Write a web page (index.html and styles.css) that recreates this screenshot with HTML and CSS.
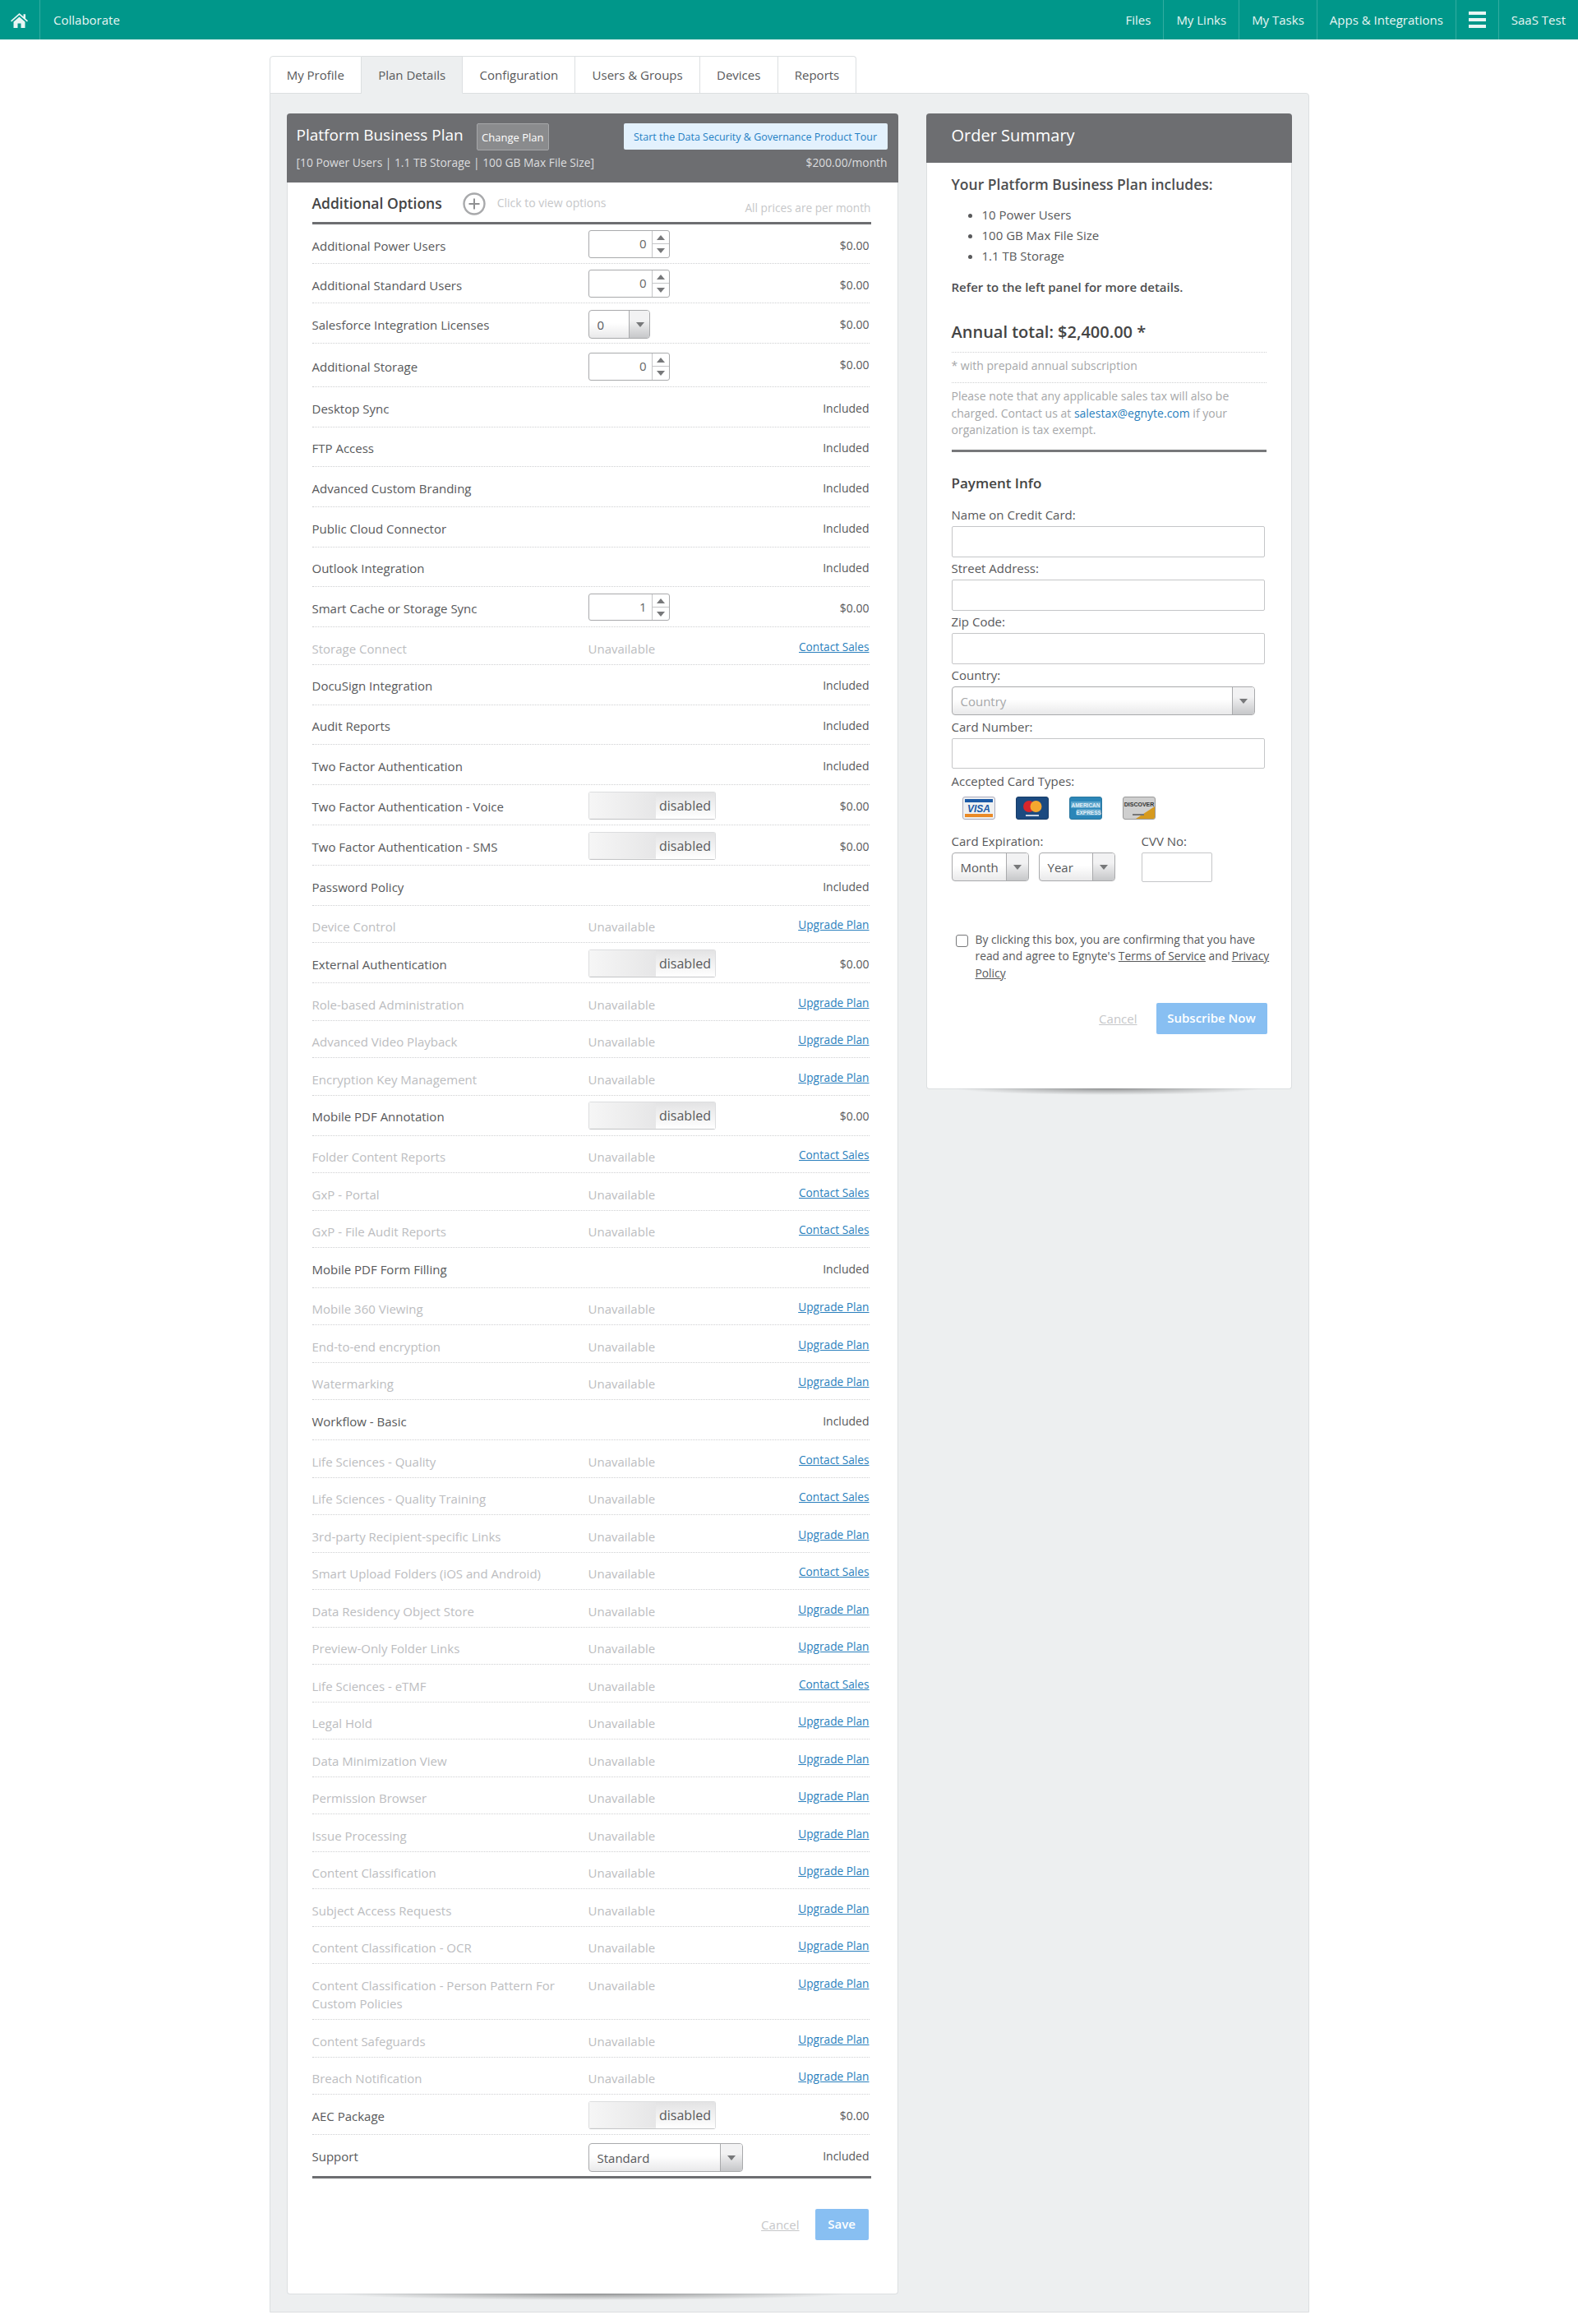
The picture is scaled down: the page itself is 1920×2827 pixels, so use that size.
FILE: index.html
```html
<!DOCTYPE html>
<html lang="en">
<head>
<meta charset="utf-8">
<title>Plan Details</title>
<link rel="stylesheet" href="styles.css">
</head>
<body>
<header class="nav">
  <a class="nav-home"><svg width="21" height="18" viewBox="0 0 21 18"><path fill="#e8f5f3" d="M10.5 0 15.5 4.3V1.2H18V6.5L21 9.3 19.9 10.5 10.5 2.3 1.1 10.5 0 9.3ZM3.5 10.6 10.5 4.6 17.5 10.6V18H12.5V12.5H8.5V18H3.5Z"/></svg></a>
  <a class="nav-item nav-brand">Collaborate</a>
  <nav class="nav-right">
    <a class="nav-item">Files</a>
    <a class="nav-item">My Links</a>
    <a class="nav-item">My Tasks</a>
    <a class="nav-item">Apps &amp; Integrations</a>
    <a class="nav-item nav-menu"><span class="bars"><i></i><i></i><i></i></span></a>
    <a class="nav-item nav-last">SaaS Test</a>
  </nav>
</header>

<main class="wrap">
  <div class="tabs">
    <a class="tab">My Profile</a>
    <a class="tab active">Plan Details</a>
    <a class="tab">Configuration</a>
    <a class="tab">Users &amp; Groups</a>
    <a class="tab">Devices</a>
    <a class="tab">Reports</a>
  </div>
  <div class="stage">
    <section class="card plan">
      <div class="plan-head">
        <div class="plan-top">
          <h1 class="plan-title">Platform Business Plan</h1>
          <a class="btn-change">Change Plan</a>
          <a class="btn-tour">Start the Data Security &amp; Governance Product Tour</a>
        </div>
        <div class="plan-sub"><span>[10 Power Users | 1.1 TB Storage | 100 GB Max File Size]</span><span>$200.00/month</span></div>
      </div>
      <div class="plan-body">
        <div class="opt-head">
          <h2 class="opt-title">Additional Options</h2>
          <svg class="opt-plus" width="28" height="28" viewBox="0 0 28 28"><circle cx="14" cy="14" r="12.5" fill="none" stroke="#a8a9ab" stroke-width="2.4"/><path d="M14 7.5v13M7.5 14h13" stroke="#8f9092" stroke-width="2"/></svg>
          <span class="opt-click">Click to view options</span>
          <span class="opt-note">All prices are per month</span>
        </div>

        <div class="row r-n r-first"><div class="lbl">Additional Power Users</div><div class="ctl"><div class="num"><span class="num-v">0</span><span class="spin"><b class="up"></b><b class="dn"></b></span></div></div><div class="val">$0.00</div></div>
        <div class="row r-n r-second"><div class="lbl">Additional Standard Users</div><div class="ctl"><div class="num"><span class="num-v">0</span><span class="spin"><b class="up"></b><b class="dn"></b></span></div></div><div class="val">$0.00</div></div>
        <div class="row r-n"><div class="lbl">Salesforce Integration Licenses</div><div class="ctl"><div class="sel sel-xs"><span class="sel-v">0</span><span class="sel-a"></span></div></div><div class="val">$0.00</div></div>
        <div class="row r-tall"><div class="lbl">Additional Storage</div><div class="ctl"><div class="num"><span class="num-v">0</span><span class="spin"><b class="up"></b><b class="dn"></b></span></div></div><div class="val">$0.00</div></div>
        <div class="row r-i"><div class="lbl">Desktop Sync</div><div class="ctl"></div><div class="val">Included</div></div>
        <div class="row r-i"><div class="lbl">FTP Access</div><div class="ctl"></div><div class="val">Included</div></div>
        <div class="row r-i"><div class="lbl">Advanced Custom Branding</div><div class="ctl"></div><div class="val">Included</div></div>
        <div class="row r-i"><div class="lbl">Public Cloud Connector</div><div class="ctl"></div><div class="val">Included</div></div>
        <div class="row r-i"><div class="lbl">Outlook Integration</div><div class="ctl"></div><div class="val">Included</div></div>
        <div class="row r-n"><div class="lbl">Smart Cache or Storage Sync</div><div class="ctl"><div class="num num-s"><span class="num-v">1</span><span class="spin"><b class="up"></b><b class="dn"></b></span></div></div><div class="val">$0.00</div></div>
        <div class="row r-u"><div class="lbl">Storage Connect</div><div class="ctl">Unavailable</div><a class="val link">Contact Sales</a></div>
        <div class="row r-i"><div class="lbl">DocuSign Integration</div><div class="ctl"></div><div class="val">Included</div></div>
        <div class="row r-i"><div class="lbl">Audit Reports</div><div class="ctl"></div><div class="val">Included</div></div>
        <div class="row r-i"><div class="lbl">Two Factor Authentication</div><div class="ctl"></div><div class="val">Included</div></div>
        <div class="row r-n"><div class="lbl">Two Factor Authentication - Voice</div><div class="ctl"><div class="tog"><span class="tog-h"></span><span class="tog-t">disabled</span></div></div><div class="val">$0.00</div></div>
        <div class="row r-n"><div class="lbl">Two Factor Authentication - SMS</div><div class="ctl"><div class="tog"><span class="tog-h"></span><span class="tog-t">disabled</span></div></div><div class="val">$0.00</div></div>
        <div class="row r-i"><div class="lbl">Password Policy</div><div class="ctl"></div><div class="val">Included</div></div>
        <div class="row r-u"><div class="lbl">Device Control</div><div class="ctl">Unavailable</div><a class="val link">Upgrade Plan</a></div>
        <div class="row r-n"><div class="lbl">External Authentication</div><div class="ctl"><div class="tog"><span class="tog-h"></span><span class="tog-t">disabled</span></div></div><div class="val">$0.00</div></div>
        <div class="row r-u"><div class="lbl">Role-based Administration</div><div class="ctl">Unavailable</div><a class="val link">Upgrade Plan</a></div>
        <div class="row r-u"><div class="lbl">Advanced Video Playback</div><div class="ctl">Unavailable</div><a class="val link">Upgrade Plan</a></div>
        <div class="row r-u"><div class="lbl">Encryption Key Management</div><div class="ctl">Unavailable</div><a class="val link">Upgrade Plan</a></div>
        <div class="row r-n"><div class="lbl">Mobile PDF Annotation</div><div class="ctl"><div class="tog"><span class="tog-h"></span><span class="tog-t">disabled</span></div></div><div class="val">$0.00</div></div>
        <div class="row r-u"><div class="lbl">Folder Content Reports</div><div class="ctl">Unavailable</div><a class="val link">Contact Sales</a></div>
        <div class="row r-u"><div class="lbl">GxP - Portal</div><div class="ctl">Unavailable</div><a class="val link">Contact Sales</a></div>
        <div class="row r-u"><div class="lbl">GxP - File Audit Reports</div><div class="ctl">Unavailable</div><a class="val link">Contact Sales</a></div>
        <div class="row r-i"><div class="lbl">Mobile PDF Form Filling</div><div class="ctl"></div><div class="val">Included</div></div>
        <div class="row r-u"><div class="lbl">Mobile 360 Viewing</div><div class="ctl">Unavailable</div><a class="val link">Upgrade Plan</a></div>
        <div class="row r-u"><div class="lbl">End-to-end encryption</div><div class="ctl">Unavailable</div><a class="val link">Upgrade Plan</a></div>
        <div class="row r-u"><div class="lbl">Watermarking</div><div class="ctl">Unavailable</div><a class="val link">Upgrade Plan</a></div>
        <div class="row r-i"><div class="lbl">Workflow - Basic</div><div class="ctl"></div><div class="val">Included</div></div>
        <div class="row r-u"><div class="lbl">Life Sciences - Quality</div><div class="ctl">Unavailable</div><a class="val link">Contact Sales</a></div>
        <div class="row r-u"><div class="lbl">Life Sciences - Quality Training</div><div class="ctl">Unavailable</div><a class="val link">Contact Sales</a></div>
        <div class="row r-u"><div class="lbl">3rd-party Recipient-specific Links</div><div class="ctl">Unavailable</div><a class="val link">Upgrade Plan</a></div>
        <div class="row r-u"><div class="lbl">Smart Upload Folders (iOS and Android)</div><div class="ctl">Unavailable</div><a class="val link">Contact Sales</a></div>
        <div class="row r-u"><div class="lbl">Data Residency Object Store</div><div class="ctl">Unavailable</div><a class="val link">Upgrade Plan</a></div>
        <div class="row r-u"><div class="lbl">Preview-Only Folder Links</div><div class="ctl">Unavailable</div><a class="val link">Upgrade Plan</a></div>
        <div class="row r-u"><div class="lbl">Life Sciences - eTMF</div><div class="ctl">Unavailable</div><a class="val link">Contact Sales</a></div>
        <div class="row r-u"><div class="lbl">Legal Hold</div><div class="ctl">Unavailable</div><a class="val link">Upgrade Plan</a></div>
        <div class="row r-u"><div class="lbl">Data Minimization View</div><div class="ctl">Unavailable</div><a class="val link">Upgrade Plan</a></div>
        <div class="row r-u"><div class="lbl">Permission Browser</div><div class="ctl">Unavailable</div><a class="val link">Upgrade Plan</a></div>
        <div class="row r-u"><div class="lbl">Issue Processing</div><div class="ctl">Unavailable</div><a class="val link">Upgrade Plan</a></div>
        <div class="row r-u"><div class="lbl">Content Classification</div><div class="ctl">Unavailable</div><a class="val link">Upgrade Plan</a></div>
        <div class="row r-u"><div class="lbl">Subject Access Requests</div><div class="ctl">Unavailable</div><a class="val link">Upgrade Plan</a></div>
        <div class="row r-u"><div class="lbl">Content Classification - OCR</div><div class="ctl">Unavailable</div><a class="val link">Upgrade Plan</a></div>
        <div class="row r-u"><div class="lbl">Content Classification - Person Pattern For Custom Policies</div><div class="ctl">Unavailable</div><a class="val link">Upgrade Plan</a></div>
        <div class="row r-u"><div class="lbl">Content Safeguards</div><div class="ctl">Unavailable</div><a class="val link">Upgrade Plan</a></div>
        <div class="row r-u"><div class="lbl">Breach Notification</div><div class="ctl">Unavailable</div><a class="val link">Upgrade Plan</a></div>
        <div class="row r-n"><div class="lbl">AEC Package</div><div class="ctl"><div class="tog"><span class="tog-h"></span><span class="tog-t">disabled</span></div></div><div class="val">$0.00</div></div>
        <div class="row r-last"><div class="lbl">Support</div><div class="ctl"><div class="sel sel-lg"><span class="sel-v">Standard</span><span class="sel-a"></span></div></div><div class="val">Included</div></div>

        <div class="actions plan-actions"><a class="cancel">Cancel</a><a class="btn-save">Save</a></div>
      </div>
    </section>

    <aside class="card summary">
      <h2 class="sum-head">Order Summary</h2>
      <div class="sum-body">
        <h3 class="inc-title">Your Platform Business Plan includes:</h3>
        <ul class="inc-list">
          <li>10 Power Users</li>
          <li>100 GB Max File Size</li>
          <li>1.1 TB Storage</li>
        </ul>
        <p class="refer">Refer to the left panel for more details.</p>
        <div class="total">Annual total: $2,400.00 *</div>
        <p class="prepaid">* with prepaid annual subscription</p>
        <p class="note">Please note that any applicable sales tax will also be charged. Contact us at <a class="mail">salestax@egnyte.com</a> if your organization is tax exempt.</p>
        <h3 class="pay-title">Payment Info</h3>
        <label class="flabel">Name on Credit Card:</label>
        <input class="field" type="text">
        <label class="flabel">Street Address:</label>
        <input class="field" type="text">
        <label class="flabel">Zip Code:</label>
        <input class="field" type="text">
        <label class="flabel">Country:</label>
        <div class="sel sel-country"><span class="sel-v muted">Country</span><span class="sel-a"></span></div>
        <label class="flabel flabel-n">Card Number:</label>
        <input class="field field-n" type="text">
        <label class="flabel flabel-a">Accepted Card Types:</label>
        <div class="cards">
          <svg width="40" height="28" viewBox="0 0 40 28"><rect x=".5" y=".5" width="39" height="27" rx="2.5" fill="#eef0f2" stroke="#aab"/><rect x="3" y="3" width="34" height="4" fill="#1c5aa6"/><rect x="3" y="21" width="34" height="4" fill="#ea8a27"/><text x="20" y="19" class="c-visa" text-anchor="middle">VISA</text></svg>
          <svg width="40" height="28" viewBox="0 0 40 28"><rect x=".5" y=".5" width="39" height="27" rx="2.5" fill="#1c4a80" stroke="#173c68"/><circle cx="16" cy="12" r="7" fill="#d8262c"/><circle cx="24.5" cy="12" r="7" fill="#f3a72f"/><rect x="12" y="22" width="16" height="2" fill="#c8d4e4"/></svg>
          <svg width="40" height="28" viewBox="0 0 40 28"><rect x=".5" y=".5" width="39" height="27" rx="2.5" fill="#2b86b8" stroke="#2a779f"/><rect x="2" y="6" width="36" height="8" fill="#5ba5cc"/><rect x="9" y="15" width="29" height="8" fill="#5ba5cc"/><text x="20" y="12.5" class="c-amex" text-anchor="middle">AMERICAN</text><text x="23.5" y="21.5" class="c-amex" text-anchor="middle">EXPRESS</text></svg>
          <svg width="40" height="28" viewBox="0 0 40 28"><rect x=".5" y=".5" width="39" height="27" rx="2.5" fill="#cfcfcf" stroke="#999"/><path d="M16 27 39 12V25a2 2 0 0 1-2 2Z" fill="#d69a1f"/><text x="20" y="12" class="c-disc" text-anchor="middle">DISCOVER</text><rect x="12" y="21" width="14" height="2" fill="#777"/></svg>
        </div>
        <div class="exp">
          <div class="exp-l">
            <label class="flabel">Card Expiration:</label>
            <div class="exp-sels">
              <div class="sel sel-month"><span class="sel-v">Month</span><span class="sel-a"></span></div>
              <div class="sel sel-year"><span class="sel-v">Year</span><span class="sel-a"></span></div>
            </div>
          </div>
          <div class="exp-r">
            <label class="flabel">CVV No:</label>
            <input class="field field-cvv" type="text">
          </div>
        </div>
        <div class="agree">
          <input class="agree-box" type="checkbox">
          <p class="agree-text">By clicking this box, you are confirming that you have read and agree to Egnyte's <a class="tos">Terms of Service</a> and <a class="tos">Privacy Policy</a></p>
        </div>
        <div class="actions sum-actions"><a class="cancel">Cancel</a><a class="btn-sub">Subscribe Now</a></div>
      </div>
    </aside>
  </div>
</main>
</body>
</html>
```

FILE: styles.css
```css
* { box-sizing: border-box; }
html, body { margin: 0; padding: 0; }
body { background: #fff; color: #58595b; font-family: "Open Sans", "Liberation Sans", sans-serif; font-size: 15px; line-height: 20px; min-height: 2827px; }
h1, h2, h3, p, ul { margin: 0; padding: 0; font-weight: 400; }

.nav { display: flex; align-items: stretch; height: 48px; background: #00978a; color: #e8f5f3; }
.nav-home { width: 49px; border-right: 1px solid #33aca1; display: flex; align-items: center; justify-content: center; padding-top: 1px; padding-right: 1px; }
.nav-item { display: flex; align-items: center; padding: 0 15px 1px; border-right: 1px solid #33aca1; }
.nav-brand { border-right: 0; padding-left: 16px; }
.nav-right { display: flex; margin-left: auto; }
.nav-last { border-right: 0; }
.nav-menu { padding: 0 15px; }
.bars { display: flex; flex-direction: column; gap: 4px; width: 21px; }
.bars i { display: block; height: 4px; background: #e8f5f3; }

.wrap { width: 1265px; margin: 20px auto 0; }
.tabs { display: flex; height: 46px; position: relative; }
.tab { display: flex; align-items: center; padding: 0 20.2px; background: #fff; border: 1px solid #dcdfe1; border-left: 0; color: #58595b; }
.tab:first-child { border-left: 1px solid #dcdfe1; border-top-left-radius: 4px; }
.tab:last-child { border-top-right-radius: 4px; }
.tab.active { background: #edeff0; border-bottom-color: #edeff0; }
.stage { display: flex; gap: 34px; align-items: flex-start; background: #edeff0; border: 1px solid #dcdfe1; border-top-right-radius: 4px; padding: 24px 20px 20px; margin-top: -1px; height: 2700px; }

.card { position: relative; background: #fff; border: 1px solid #dcdfe1; border-top: 0; border-radius: 4px; }
.card::after { content: ""; position: absolute; left: 8%; right: 8%; top: 100%; height: 8px; background: radial-gradient(ellipse 50% 100% at 50% 0, rgba(0, 0, 0, .38), rgba(0, 0, 0, 0)); }

.plan { width: 744px; height: 2653px; }
.plan-head { height: 84px; background: #6d6e71; color: #fff; border-radius: 4px 4px 0 0; padding: 12px 13px 0 12px; margin: 0 -1px; }
.plan-top { display: flex; align-items: flex-start; }
.plan-title { font-size: 19px; line-height: 28px; margin-right: 16px; white-space: nowrap; }
.btn-change { width: 88px; height: 33px; background: #8a8b8d; border: 1px solid #a6a7a9; border-radius: 2px; font-size: 13px; line-height: 33px; text-align: center; color: #fff; }
.btn-tour { margin-left: auto; width: 321px; height: 32px; background: #e3f1fd; color: #1f7fc4; border-radius: 2px; font-size: 12.5px; line-height: 33px; text-align: center; }
.plan-sub { display: flex; justify-content: space-between; font-size: 13.8px; line-height: 20px; margin-top: 5px; color: #dcdddf; }

.plan-body { padding: 0 34px 0 30px; }
.opt-head { display: flex; align-items: flex-start; height: 51px; border-bottom: 3px solid #6d6e71; padding-top: 12px; margin-right: -2px; }
.opt-title { font-size: 17.5px; font-weight: 600; line-height: 26px; color: #444; }
.opt-plus { margin-left: 25px; flex: none; }
.opt-click { margin-left: 14px; color: #c6c7c9; line-height: 26px; font-size: 14px; }
.opt-note { margin-left: auto; color: #c6c7c9; margin-top: 9px; font-size: 13.7px; line-height: 20px; }

.row { display: grid; grid-template-columns: 336px 1fr auto; padding-top: 14.5px; border-bottom: 1px dotted #cfd0d2; line-height: 22.5px; }
.r-i { height: 48.7px; }
.r-n { height: 49px; }
.r-u { padding-bottom: 7.5px; }
.r-u .lbl, .r-u .ctl { color: #bcbdbf; }
.r-tall { height: 53px; }
.r-tall .lbl { margin-top: 2px; }
.r-first { height: 48px; }
.r-second { height: 48px; }
.r-last { height: 53px; border-bottom: 3px solid #6d6e71; margin-right: -2px; padding-right: 2px; }
.lbl { padding-right: 20px; }
.val { text-align: right; font-size: 14px; }
.link { color: #2a7fbd; text-decoration: underline; margin-top: -2px; font-size: 13.7px; }

.num { display: flex; width: 99px; height: 34px; margin-top: -8px; border: 1px solid #a9aaac; border-radius: 3px; background: #fff; line-height: 30px; }
.r-tall .num { margin-top: -4px; }
.num-s { height: 33px; margin-top: -7px; }
.num-v { flex: 1; text-align: right; padding-right: 6px; color: #666; font-size: 15px; }
.spin { width: 21px; border-left: 1px solid #c5c6c8; display: flex; flex-direction: column; }
.spin b { flex: 1; position: relative; }
.up { border-bottom: 1px solid #c5c6c8; }
.up::after, .dn::after { content: ""; position: absolute; left: 5px; top: 5px; border-left: 5px solid transparent; border-right: 5px solid transparent; }
.up::after { border-bottom: 6px solid #77787a; }
.dn::after { border-top: 6px solid #77787a; }

.sel { display: flex; height: 35px; border: 1px solid #a9aaac; border-radius: 4px; background: linear-gradient(#fff 45%, #e9e9ea); line-height: 35px; }
.sel-v { flex: 1; padding-left: 10px; color: #58595b; font-size: 15px; }
.sel-a { width: 27px; border-left: 1px solid #a9aaac; position: relative; background: linear-gradient(#f2f2f3 35%, #c6c7c9); border-radius: 0 3px 3px 0; flex: none; }
.sel-a::after { content: ""; position: absolute; left: 8px; top: 14px; border-left: 5px solid transparent; border-right: 5px solid transparent; border-top: 6px solid #77787a; }
.sel-xs { width: 75px; margin-top: -7px; }
.sel-xs .sel-a { width: 25px; }
.sel-lg { width: 188px; margin-top: -5px; }
.muted { color: #a6a7a9; }
.sel-country { width: 369px; }
.sel-month { width: 94px; }
.sel-year { width: 93px; }

.tog { display: flex; width: 155px; height: 34px; margin-top: -7px; border: 1px solid #dcdddf; border-bottom-color: #c5c6c8; border-radius: 3px; }
.tog-h { width: 81px; background: linear-gradient(90deg, #f6f6f6, #e6e6e7); box-shadow: inset 0 -1px 0 #eee; }
.tog-t { flex: 1; text-align: center; font-size: 16px; line-height: 32px; color: #58595b; background: linear-gradient(#e3e3e4, #fff); }

.actions { display: flex; align-items: center; justify-content: flex-end; }
.plan-actions { margin-top: 37px; margin-right: 1px; }
.cancel { color: #c6c7c9; text-decoration: underline; margin-right: 19px; }
.btn-save, .btn-sub { display: block; height: 38px; line-height: 36px; background: #88bff2; color: #fff; border-radius: 2px; text-align: center; font-weight: 600; }
.btn-save { width: 65px; }
.btn-sub { width: 135px; }

.summary { width: 445px; height: 1187px; }
.sum-head { height: 60px; margin: 0 -1px; padding: 0 31px; background: #6d6e71; color: #fff; border-radius: 4px 4px 0 0; font-size: 20px; line-height: 54px; }
.sum-body { padding: 15px 31px 0 30px; }
.inc-title { font-size: 17.5px; font-weight: 600; line-height: 22px; color: #4d4e50; }
.inc-list { margin: 14px 0 0; padding-left: 37px; line-height: 25px; color: #58595b; }
.refer { margin-top: 15px; font-weight: 600; color: #4d4e50; }
.total { margin-top: 31px; padding-bottom: 10px; font-size: 20px; font-weight: 600; line-height: 28px; border-bottom: 1px dotted #cfd0d2; color: #444; margin-right: -1px; }
.prepaid { margin-top: 6px; padding-bottom: 10px; font-size: 14px; color: #a6a7a9; border-bottom: 1px dotted #cfd0d2; margin-right: -1px; }
.note { margin-top: 6px; padding-bottom: 13px; font-size: 14px; line-height: 20.5px; color: #a6a7a9; border-bottom: 3px solid #77787a; margin-right: -1px; }
.mail { color: #2a7fbd; }
.pay-title { margin-top: 26px; font-size: 17px; font-weight: 600; line-height: 24px; color: #444; }
.flabel { display: block; line-height: 20px; margin-top: 3px; color: #58595b; }
.pay-title + .flabel { margin-top: 16px; }
.field { display: block; width: 381px; height: 38px; margin-top: 4px; border: 1px solid #c5c6c8; border-radius: 2px; background: #fff; padding: 0; }
.flabel + .sel { margin-top: 4px; }
.flabel-n { margin-top: 4px; }
.field-n { height: 37px; margin-top: 4px; }
.flabel-a { margin-top: 5px; }
.cards { display: flex; gap: 25px; padding-left: 13px; margin-top: 9px; height: 28px; }
.c-visa { font: italic 700 12px "Liberation Sans", sans-serif; fill: #1c5aa6; }
.c-amex { font: 700 6.5px "Liberation Sans", sans-serif; fill: #e4f0f7; }
.c-disc { font: 700 7px "Liberation Sans", sans-serif; fill: #333; }
.exp { display: flex; margin-top: 16px; }
.exp-l { width: 231px; }
.exp-l .flabel, .exp-r .flabel { margin-top: 0; }
.exp-sels { display: flex; gap: 12px; margin-top: 4px; }
.exp-sels .sel { margin-top: 0; }
.field-cvv { width: 86px; height: 36px; margin-top: 4px; }
.agree { display: flex; margin-top: 60px; padding-left: 5px; }
.agree-box { width: 15px; height: 15px; margin: 4px 9px 0 0; flex: none; appearance: none; border: 1px solid #77787a; border-radius: 3px; background: #fff; }
.agree-text { line-height: 20.5px; font-size: 13.8px; width: 362px; margin-right: -28px; }
.tos { color: #58595b; text-decoration: underline; }
.sum-actions { margin-top: 26px; margin-right: -2px; }
.sum-actions .cancel { margin-right: 23px; }
```
